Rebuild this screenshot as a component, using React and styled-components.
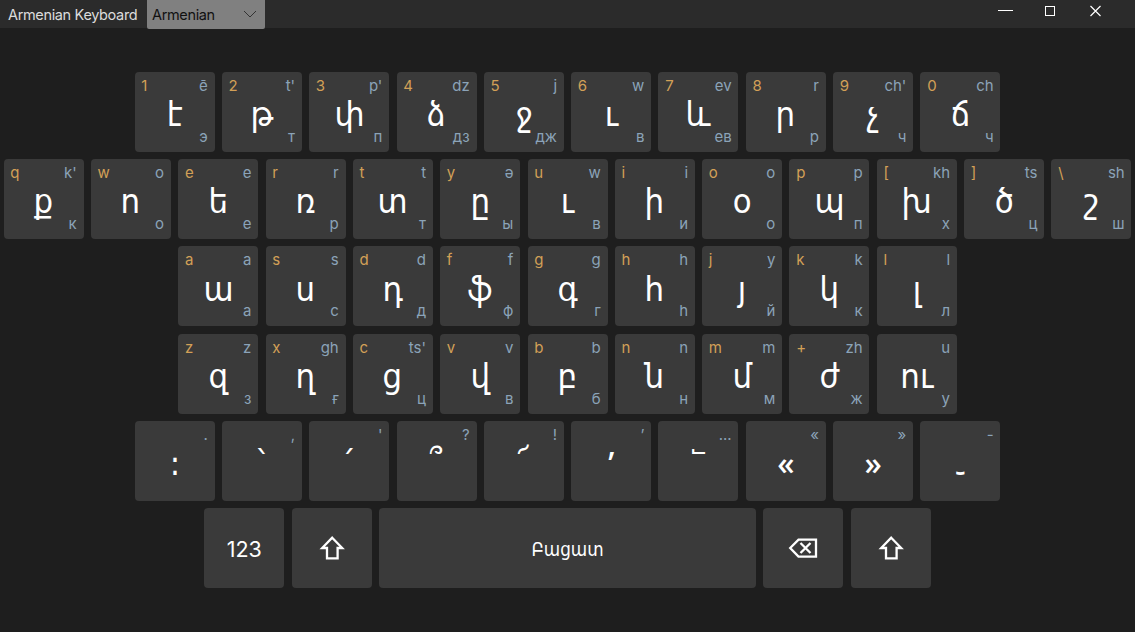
import React from 'react'
import styled, { createGlobalStyle } from 'styled-components'

const GlobalStyle = createGlobalStyle`
    body {
        margin: 0;
        background: #1e1e1e;
        overflow: hidden;
    }
`;

const Window = styled.div`
    display: flex;
    flex-direction: column;
    width: 1135px;
    height: 632px;
    overflow: hidden;
    background: #1e1e1e;
    font-family: Inter, "Noto Sans", sans-serif;
`;

const TitleBar = styled.header`
    display: flex;
    align-items: flex-start;
    height: 28px;
    background: #2b2b2b;
`;

const Title = styled.h1`
    width: 139px;
    margin: 0;
    padding-left: 8px;
    font-size: 14.5px;
    font-weight: 400;
    line-height: 30px;
    letter-spacing: -0.35px;
    color: #dcdcdc;
    white-space: nowrap;
`;

const LanguageSelect = styled.button`
    display: flex;
    align-items: center;
    justify-content: space-between;
    width: 118px;
    height: 29px;
    padding: 0 8px 0 5px;
    border: none;
    border-radius: 0 0 2px 2px;
    background: #808080;
    color: #111;
    font-family: inherit;
    font-size: 14.5px;
    letter-spacing: -0.35px;
    svg {
        margin-bottom: 1px;
    }
`;

const WindowButtons = styled.div`
    display: flex;
    margin-left: auto;
    padding-right: 16px;
    svg {
        width: 46px;
        height: 22px;
    }
`;

const Keyboard = styled.main`
    display: flex;
    flex-direction: column;
    align-items: center;
    gap: 7.36px;
    padding-top: 43.5px;
`;

const Row = styled.div`
    display: flex;
    gap: 7.33px;
`;

const Key = styled.button`
    display: grid;
    grid-template: 100% / 100%;
    box-sizing: border-box;
    width: ${props => props.$wide ? '377px' : '80px'};
    height: 80px;
    padding: 0;
    border: none;
    border-radius: 4px;
    background: #3a3a3a;
    color: #fff;
    font-family: inherit;
    > * {
        grid-area: 1 / 1;
    }
`;

const Hint = styled.span`
    justify-self: ${props => props.$left ? 'start' : 'end'};
    align-self: ${props => props.$bottom ? 'end' : 'start'};
    padding: 5px 6.8px 6px 6.7px;
    font-size: 15px;
    line-height: 18px;
    color: ${props => props.$left ? '#d2a057' : '#8ba3b8'};
`;

const Letter = styled.span`
    justify-self: center;
    align-self: start;
    padding-top: ${props => props.$low ? '29px' : '22.5px'};
    font-family: ${props => props.$latin ? '"Noto Sans", sans-serif' : '"DejaVu Sans Condensed", "DejaVu Sans", sans-serif'};
    font-stretch: ${props => props.$latin ? 'normal' : 'condensed'};
    font-size: ${props => props.$latin ? '32px' : '33px'};
    font-weight: ${props => props.$latin ? 500 : 400};
    line-height: ${props => props.$latin ? '40px' : '42px'};
    transform: ${props => props.$latin ? 'none' : 'scaleX(1.04)'};
`;

const Caption = styled.span`
    place-self: center;
    padding-top: ${props => props.$armenian ? '3px' : '2px'};
    font-family: ${props => props.$armenian ? '"DejaVu Sans Condensed", "DejaVu Sans", sans-serif' : 'inherit'};
    font-stretch: ${props => props.$armenian ? 'condensed' : 'normal'};
    font-size: ${props => props.$armenian ? '18.7px' : '21.5px'};
    line-height: 24px;
`;

const KeyIcon = styled.svg`
    place-self: center;
    width: 32px;
    height: 32px;
    fill: none;
    stroke: #fff;
    stroke-width: 2.3;
`;

// [shortcut, letter, latin, cyrillic]
const rows = [
    [
        ['1', 'է', 'ē', 'э'],
        ['2', 'թ', "t'", 'т'],
        ['3', 'փ', "p'", 'п'],
        ['4', 'ձ', 'dz', 'дз'],
        ['5', 'ջ', 'j', 'дж'],
        ['6', 'ւ', 'w', 'в'],
        ['7', 'և', 'ev', 'ев'],
        ['8', 'ր', 'r', 'р'],
        ['9', 'չ', "ch'", 'ч'],
        ['0', 'ճ', 'ch', 'ч'],
    ],
    [
        ['q', 'ք', "k'", 'к'],
        ['w', 'ո', 'o', 'о'],
        ['e', 'ե', 'e', 'е'],
        ['r', 'ռ', 'r', 'р'],
        ['t', 'տ', 't', 'т'],
        ['y', 'ը', 'ə', 'ы'],
        ['u', 'ւ', 'w', 'в'],
        ['i', 'ի', 'i', 'и'],
        ['o', 'օ', 'o', 'о'],
        ['p', 'պ', 'p', 'п'],
        ['[', 'խ', 'kh', 'х'],
        [']', 'ծ', 'ts', 'ц'],
        ['\\', 'շ', 'sh', 'ш'],
    ],
    [
        ['a', 'ա', 'a', 'а'],
        ['s', 'ս', 's', 'с'],
        ['d', 'դ', 'd', 'д'],
        ['f', 'ֆ', 'f', 'ф'],
        ['g', 'գ', 'g', 'г'],
        ['h', 'հ', 'h', 'һ'],
        ['j', 'յ', 'y', 'й'],
        ['k', 'կ', 'k', 'к'],
        ['l', 'լ', 'l', 'л'],
    ],
    [
        ['z', 'զ', 'z', 'з'],
        ['x', 'ղ', 'gh', 'ғ'],
        ['c', 'ց', "ts'", 'ц'],
        ['v', 'վ', 'v', 'в'],
        ['b', 'բ', 'b', 'б'],
        ['n', 'ն', 'n', 'н'],
        ['m', 'մ', 'm', 'м'],
        ['+', 'ժ', 'zh', 'ж'],
        ['', 'ու', 'u', 'у'],
    ],
    [
        ['', ':', '.', ''],
        ['', '՝', ',', ''],
        ['', '՛', "'", ''],
        ['', '՞', '?', ''],
        ['', '՜', '!', ''],
        ['', '’', '’', ''],
        ['', '՟', '...', ''],
        ['', '«', '«', ''],
        ['', '»', '»', ''],
        ['', '֊', '-', ''],
    ],
];

const ShiftKey = () => (
    <Key>
        <KeyIcon viewBox="0 0 32 32">
            <path d="M16.2 5.7 L26.2 16 H21.6 V26.3 H11 V16 H6.2 Z" />
        </KeyIcon>
    </Key>
)

const App = () => {
    return (
        <>
            <GlobalStyle />
            <Window>
                <TitleBar>
                    <Title>Armenian Keyboard</Title>
                    <LanguageSelect>
                        Armenian
                        <svg width="14" height="8" viewBox="0 0 14 8" fill="none" stroke="#333">
                            <path d="M1 1 L7 7 L13 1" />
                        </svg>
                    </LanguageSelect>
                    <WindowButtons>
                        <svg viewBox="0 0 46 22" stroke="#fff"><path d="M17 10.5 H32" /></svg>
                        <svg viewBox="0 0 46 22" fill="none" stroke="#fff"><rect x="18.5" y="6.5" width="9" height="9" /></svg>
                        <svg viewBox="0 0 46 22" stroke="#fff" strokeWidth="1.2"><path d="M17.5 6 L27.5 16 M27.5 6 L17.5 16" /></svg>
                    </WindowButtons>
                </TitleBar>
                <Keyboard>
                    {rows.map((row, i) => (
                        <Row key={i}>
                            {row.map(([shortcut, letter, latin, cyrillic]) => (
                                <Key key={letter}>
                                    {shortcut && <Hint $left>{shortcut}</Hint>}
                                    <Hint>{latin}</Hint>
                                    <Letter $latin={'«»’'.includes(letter)} $low={letter === '֊'}>{letter}</Letter>
                                    {cyrillic && <Hint $bottom>{cyrillic}</Hint>}
                                </Key>
                            ))}
                        </Row>
                    ))}
                    <Row>
                        <Key><Caption>123</Caption></Key>
                        <ShiftKey />
                        <Key $wide><Caption $armenian>Բացատ</Caption></Key>
                        <Key>
                            <KeyIcon viewBox="0 0 32 32">
                                <path d="M3.2 16 L11.5 7.6 H29 V24.6 H11.5 Z M13.5 11 L23.5 21 M23.5 11 L13.5 21" />
                            </KeyIcon>
                        </Key>
                        <ShiftKey />
                    </Row>
                </Keyboard>
            </Window>
        </>
    )
}

export default App;
